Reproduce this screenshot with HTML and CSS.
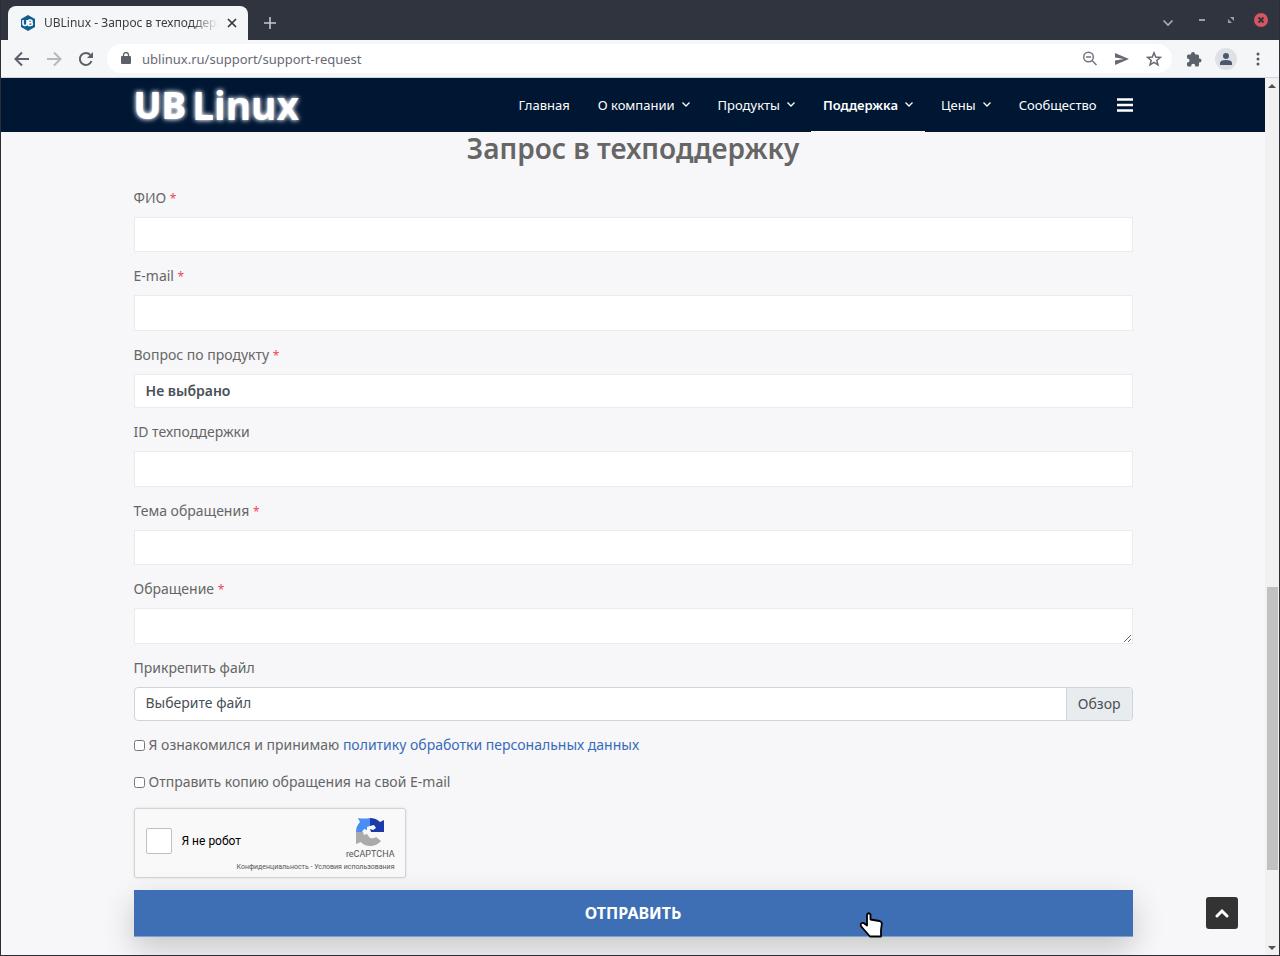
FILE: index.html
```html
<!DOCTYPE html>
<html lang="ru">
<head>
<meta charset="utf-8">
<title>UBLinux - Запрос в техподдержку</title>
<link rel="stylesheet" href="styles.css">
</head>
<body>
<div class="window">
  <header class="titlebar">
    <div class="tab">
      <svg class="favicon" width="16" height="16" viewBox="0 0 16 16"><path d="M8 0l7 4v8l-7 4-7-4V4z" fill="#0e5f8f"/><path d="M3 5v3.500q0 2 2 2t2-2V5M8.500 5v5.500h2.200q1.700 0 1.700-1.500t-1.700-1.400H8.500 M8.500 5h2q1.500 0 1.500 1.300T10.500 7.600" fill="none" stroke="#fff" stroke-width="1.600"/></svg>
      <span class="tab-title">UBLinux - Запрос в техподдержку</span>
      <button class="plain" aria-label="Закрыть вкладку"><svg width="10" height="10" viewBox="0 0 10 10"><path d="M1 1l8 8M9 1L1 9" stroke="#33363b" stroke-width="1.700"/></svg></button>
    </div>
    <button class="plain new-tab" aria-label="Новая вкладка"><svg width="12" height="12" viewBox="0 0 12 12"><path d="M6 0v12M0 6h12" stroke="#c3c9d2" stroke-width="1.600"/></svg></button>
    <div class="window-buttons">
      <button class="plain tab-search" aria-label="Поиск вкладок"><svg width="12" height="12" viewBox="0 0 12 12"><path d="M1.500 4.500L6 9l4.500-4.500" fill="none" stroke="#a9b0bc" stroke-width="1.600"/></svg></button>
      <button class="plain" aria-label="Свернуть"><svg width="12" height="12" viewBox="0 0 12 12"><path d="M3 6h6" stroke="#9aa1ae" stroke-width="2"/></svg></button>
      <button class="plain" aria-label="Восстановить"><svg width="12" height="12" viewBox="0 0 12 12"><path d="M5 3h4v4zM3 5v4h4z" fill="#9aa1ae"/></svg></button>
      <button class="plain" aria-label="Закрыть"><svg width="14" height="14" viewBox="0 0 14 14"><circle cx="7" cy="7" r="7" fill="#d4565e"/><path d="M4.500 4.500l5 5M9.500 4.500l-5 5" stroke="#2f343f" stroke-width="1.800"/></svg></button>
    </div>
  </header>
  <div class="toolbar">
    <button class="plain" aria-label="Назад"><svg width="16" height="16" viewBox="0 0 16 16"><path d="M15 8H2M8 1.500L1.500 8 8 14.500" fill="none" stroke="#5b606b" stroke-width="2"/></svg></button>
    <button class="plain" aria-label="Вперёд"><svg width="16" height="16" viewBox="0 0 16 16"><path d="M1 8h13M8 1.500L14.500 8 8 14.500" fill="none" stroke="#b5b8be" stroke-width="2"/></svg></button>
    <button class="plain" aria-label="Обновить"><svg width="16" height="16" viewBox="0 0 16 16"><path d="M13.500 10A6 6 0 1 1 12.400 4" fill="none" stroke="#5b606b" stroke-width="2"/><path d="M15 1v6H9z" fill="#5b606b"/></svg></button>
    <div class="address">
      <svg width="10" height="13" viewBox="0 0 10 13"><rect x="0" y="4" width="10" height="8" rx="1" fill="#5b606b"/><path d="M2.500 5V3a2.500 2.500 0 0 1 5 0v2" fill="none" stroke="#5b606b" stroke-width="1.300"/></svg>
      <input class="url" type="text" aria-label="Адрес" value="ublinux.ru/support/support-request">
      <div class="address-icons">
        <button class="plain" aria-label="Масштаб"><svg width="16" height="16" viewBox="0 0 16 16"><circle cx="6.500" cy="6" r="4.800" fill="none" stroke="#73777f" stroke-width="1.500"/><path d="M4 6h5M10 9.500l4.500 4.500" stroke="#73777f" stroke-width="1.500"/></svg></button>
        <button class="plain" aria-label="Отправить страницу"><svg width="16" height="16" viewBox="0 0 16 16"><path d="M1 2l14 6-14 6V9.500L10 8 1 6.500z" fill="#666a72"/></svg></button>
        <button class="plain" aria-label="В закладки"><svg width="16" height="16" viewBox="0 0 16 16"><path d="M8 1.800l1.700 4.300 4.700.3-3.600 3 1.200 4.500L8 11.400l-4 2.500 1.200-4.500-3.600-3 4.700-.3z" fill="none" stroke="#666a72" stroke-width="1.500"/></svg></button>
      </div>
    </div>
    <div class="toolbar-icons">
      <button class="plain extensions" aria-label="Расширения"><svg width="16" height="16" viewBox="0 0 16 16"><path d="M1 5q0-1.500 1.500-1.500H5V3a2 2 0 1 1 4 0v.5h2.500Q13 3.500 13 5v2.500h.5a2 2 0 1 1 0 4H13v2.500q0 1.500-1.500 1.500H9.200V14.800a2 2 0 0 0-4 0v.7H2.500Q1 15.500 1 14v-2.500h.5a2 2 0 0 0 0-4H1z" fill="#5b606b"/></svg></button>
      <button class="plain" aria-label="Профиль"><svg width="22" height="22" viewBox="0 0 22 22"><circle cx="11" cy="11" r="11" fill="#dee1e6"/><circle cx="11" cy="8" r="3" fill="#4b5870"/><path d="M5 17v-2q0-3 6-3t6 3v2z" fill="#4b5870"/></svg></button>
      <button class="plain" aria-label="Меню"><svg width="4" height="14" viewBox="0 0 4 14"><path d="M2 2v0M2 7v0M2 12v0" stroke="#555962" stroke-width="3" stroke-linecap="round"/></svg></button>
    </div>
  </div>
  <div class="viewport">
    <div class="page">
      <div class="navbar">
        <div class="container navbar-inner">
          <a class="logo" href="#"><span class="logo-ub">UB</span><span class="logo-linux">Linux</span></a>
          <nav class="menu">
            <a href="#">Главная</a>
            <a href="#">О компании <svg class="chev" width="8" height="5" viewBox="0 0 8 5"><path d="M.5.5L4 4 7.500.5"/></svg></a>
            <a href="#">Продукты <svg class="chev" width="8" height="5" viewBox="0 0 8 5"><path d="M.5.5L4 4 7.500.5"/></svg></a>
            <a class="active" href="#">Поддержка <svg class="chev" width="8" height="5" viewBox="0 0 8 5"><path d="M.5.5L4 4 7.500.5"/></svg></a>
            <a href="#">Цены <svg class="chev" width="8" height="5" viewBox="0 0 8 5"><path d="M.5.5L4 4 7.500.5"/></svg></a>
            <a href="#">Сообщество</a>
          </nav>
          <button class="plain burger" aria-label="Все разделы"><svg width="16" height="14" viewBox="0 0 16 14"><path d="M0 1.500h16M0 7h16M0 12.500h16" stroke="#fff" stroke-width="2.600"/></svg></button>
        </div>
      </div>
      <main class="container">
        <h1>Запрос в техподдержку</h1>
        <form class="form">
          <div class="field"><label for="name">ФИО <span class="req">*</span></label><input class="control" id="name" type="text"></div>
          <div class="field"><label for="mail">E-mail <span class="req">*</span></label><input class="control tall" id="mail" type="email"></div>
          <div class="field"><label for="product">Вопрос по продукту <span class="req">*</span></label><select class="control short" id="product"><option>Не выбрано</option></select></div>
          <div class="field"><label for="sid">ID техподдержки</label><input class="control tall" id="sid" type="text"></div>
          <div class="field"><label for="topic">Тема обращения <span class="req">*</span></label><input class="control" id="topic" type="text"></div>
          <div class="field"><label for="message">Обращение <span class="req">*</span></label><textarea class="control tall" id="message"></textarea></div>
          <div class="field">
            <label for="file">Прикрепить файл</label>
            <div class="file"><span class="file-name">Выберите файл</span><button class="file-browse" id="file" type="button">Обзор</button></div>
          </div>
          <div class="check"><input type="checkbox" id="agree"><label for="agree">Я ознакомился и принимаю <a href="#">политику обработки персональных данных</a></label></div>
          <div class="check"><input type="checkbox" id="copy"><label for="copy">Отправить копию обращения на свой E-mail</label></div>
          <div class="captcha">
            <div class="captcha-check"><input type="checkbox" id="robot"><label for="robot">Я не робот</label></div>
            <div class="captcha-brand">
              <svg width="28" height="28" viewBox="0 0 28 28"><path d="M14 0v8l-3 1v3l-3-1-2 3H0Q0 8 4 4L2 0q6 1 12 0z" fill="#4a8df5"/><path d="M14 0q6 0 10 4l4-2v12H15l-1-3 3 1 3-2-2-3-4 1z" fill="#1c3aa9"/><path d="M0 14h7l1 3 3-1 3 4q4 1 6-1l5 4q-4 5-11 5-6 0-9-4l-5 2z" fill="#ababab"/></svg>
              <span>reCAPTCHA</span>
            </div>
            <div class="captcha-links"><a href="#">Конфиденциальность</a> - <a href="#">Условия использования</a></div>
          </div>
          <button class="submit" type="button">ОТПРАВИТЬ</button>
        </form>
      </main>
      <button class="to-top" aria-label="Наверх"><svg width="14" height="10" viewBox="0 0 14 10"><path d="M2 8l5-5 5 5" fill="none" stroke="#fff" stroke-width="3" stroke-linecap="round"/></svg></button>
    </div>
    <div class="scrollbar">
      <svg width="8" height="4" viewBox="0 0 8 4"><path d="M4 0l4 4H0z" fill="#505050"/></svg>
      <div class="track"><div class="thumb"></div></div>
      <svg width="8" height="4" viewBox="0 0 8 4"><path d="M0 0h8L4 4z" fill="#505050"/></svg>
    </div>
  </div>
  <svg class="pointer" width="26" height="28" viewBox="0 0 26 28"><path d="M9 4.500q1.700-2.500 3.500 0V9.500l9 1.500q2.500.8 2.300 3L23 20v6.500H12L4.500 18Q1 14.500 4 13q1.500-.5 3 1l2 1.500z" fill="#fff" stroke="#000" stroke-width="1.800" stroke-linejoin="round"/></svg>
</div>
</body>
</html>
```
FILE: styles.css
```css
* { box-sizing: border-box; }
body {
  margin: 0;
  font-family: "Noto Sans", sans-serif;
  font-size: 14px;
  line-height: 22px;
  color: #666;
}
input, select, textarea, button { font: inherit; color: inherit; }
a { text-decoration: none; }
svg { display: block; flex: none; }
.plain { border: 0; padding: 0; background: none; display: flex; flex: none; }

.window {
  position: relative;
  display: flex;
  flex-direction: column;
  height: 100vh;
  border: 1px solid #2b2e39;
  border-top: 0;
  background: #f7f7f9;
  overflow: hidden;
}

.titlebar { display: flex; align-items: center; height: 40px; padding: 0 11px 0 7px; background: #2f343f; flex: none; }
.tab {
  align-self: flex-end;
  display: flex;
  align-items: center;
  gap: 8px;
  width: 240px;
  height: 34px;
  padding: 0 11px 0 12px;
  border-radius: 8px 8px 0 0;
  background: #f5f6f8;
}
.tab-title {
  flex: 1;
  overflow: hidden;
  white-space: nowrap;
  font-size: 12px;
  color: #3c4043;
  mask-image: linear-gradient(to right, #000 84%, transparent);
}
.new-tab { margin: 6px 0 0 16px; }
.window-buttons { display: flex; align-items: center; gap: 17px; margin-left: auto; }
.tab-search { margin: 4px 5px 0 0; }

.toolbar {
  display: flex;
  align-items: center;
  gap: 16px;
  height: 38px;
  padding: 0 19px 0 13px;
  border-bottom: 1px solid #d0d3e2;
  background: #f5f6f8;
  flex: none;
}
.address {
  flex: 1;
  display: flex;
  align-items: center;
  gap: 11px;
  height: 29px;
  margin-left: -3px;
  padding: 0 10px 0 14px;
  border-radius: 15px;
  background: #fff;
}
.url { flex: 1; border: 0; padding: 0; background: none; color: #666a72; font-size: 13px; outline: 0; }
.address-icons { display: flex; gap: 16px; }
.toolbar-icons { display: flex; align-items: center; gap: 19px; margin-left: -2px; }
.extensions { margin-right: -6px; }

.viewport { flex: 1; display: flex; min-height: 0; }
.page { position: relative; flex: 1; overflow: hidden; background: #f7f7f9; }
.container { width: calc(100% - 64px); max-width: 999px; margin: 0 auto; }

.navbar { background: #001733; color: #fff; }
.navbar-inner { display: flex; align-items: center; height: 54px; }
.logo { display: flex; align-items: center; gap: 6px; color: #fff; text-shadow: 0 0 4px #fff, 0 0 6px #7f8fa8; }
.logo-ub { font: 800 37px/54px "Noto Sans", sans-serif; }
.logo-linux { font-size: 39px; line-height: 54px; font-weight: 700; }
.menu { display: flex; align-self: stretch; margin-left: auto; }
.menu a { display: flex; align-items: center; gap: 7px; padding: 0 14px; border-bottom: 1px solid transparent; color: #fff; font-size: 13px; }
.menu .active { margin: 0 2px; padding: 0 12px; font-weight: 600; border-color: #fff; }
.burger { margin-left: 6px; }
.chev path { fill: none; stroke: #fff; stroke-width: 1.300; }

h1 { margin: 0 0 22px; font-size: 28px; line-height: 33px; font-weight: 600; text-align: center; }
.form { display: flex; flex-direction: column; }
.field { display: flex; flex-direction: column; gap: 8px; margin-bottom: 13px; }
.req { color: #f0455a; font-size: 12px; line-height: 12px; }
.control { width: 100%; height: 35px; padding: 0 11px; border: 1px solid #ebebed; border-radius: 0; background: #fff; color: #495057; display: block; }
.control.tall { height: 36px; }
.control.short { height: 34px; }
select.control { appearance: none; font-weight: 600; }
textarea.control { resize: vertical; }
.file { display: flex; height: 34px; border: 1px solid #ced4da; border-radius: 4px; background: #fff; color: #495057; overflow: hidden; }
.file-name { flex: 1; padding: 4px 11px; }
.file-browse { padding: 0 11px; border: 0; border-left: 1px solid #ced4da; background: #e9ecef; }
.check { display: flex; align-items: center; gap: 4px; margin-bottom: 15px; }
.check input { width: 11px; height: 11px; margin: 0; }
.check a { color: #376bb9; }

.captcha {
  display: grid;
  grid-template-columns: 1fr auto;
  align-content: start;
  width: 272px;
  height: 70px;
  padding: 9px 10px 0 11px;
  border: 1px solid #d3d3d3;
  border-radius: 3px;
  background: #f9f9f9;
  box-shadow: 0 0 3px rgba(0, 0, 0, .1);
  font-family: Roboto, sans-serif;
  color: #555;
}
.captcha-check { display: flex; align-items: center; gap: 10px; font-size: 12px; color: #000; }
.captcha-check input { appearance: none; width: 26px; height: 26px; margin: 0; border: 1px solid #c1c1c1; border-radius: 2px; background: #fff; }
.captcha-brand { display: flex; flex-direction: column; align-items: center; font-size: 9px; line-height: 17px; }
.captcha-links { grid-column: 1 / 3; text-align: right; font-size: 7px; line-height: 8px; }
.captcha-links a { color: inherit; }

.submit {
  height: 47px;
  margin-top: 12px;
  border: 0;
  border-bottom: 1px solid #7d9fd1;
  background: #3e6fb5;
  color: #fff;
  font-size: 16px;
  font-weight: 700;
  box-shadow: 0 12px 32px rgba(0, 0, 0, .2);
}
.to-top {
  position: absolute;
  right: 27px;
  bottom: 26px;
  display: flex;
  align-items: center;
  justify-content: center;
  width: 32px;
  height: 32px;
  padding: 0;
  border: 0;
  border-radius: 3px;
  background: #333;
}
.scrollbar { display: flex; flex-direction: column; align-items: center; width: 14px; padding: 6px 0 5px; background: #f1f1f1; }
.track { flex: 1; width: 100%; padding: 0 1px 0 2px; margin: 6px 0; display: flex; flex-direction: column; }
.track::before { content: ""; flex: 495; }
.thumb { flex: 285; background: #c1c1c1; }
.track::after { content: ""; flex: 70; }
.pointer { position: absolute; left: 857px; top: 910px; }
```
